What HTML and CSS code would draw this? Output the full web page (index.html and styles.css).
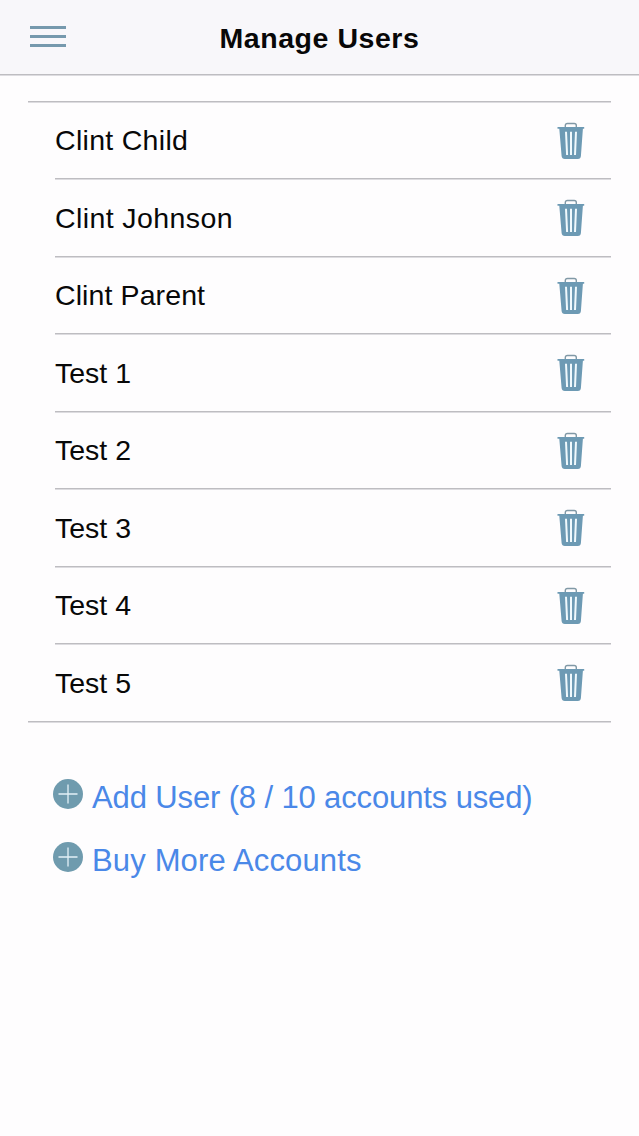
FILE: index.html
```html
<!DOCTYPE html>
<html lang="en">
<head>
<meta charset="utf-8">
<title>Manage Users</title>
<link rel="stylesheet" href="styles.css">
</head>
<body>
<svg class="defs" aria-hidden="true">
  <symbol id="trash" viewBox="0 0 28 38">
    <path d="M8.3 5.4V3.6Q8.3 1.5 10.4 1.5H17.2Q19.3 1.5 19.3 3.6V5.4" fill="none" stroke="#8199a6" stroke-width="1.4"/>
    <path d="M.5 5H27.2V6.8H25.9L23.9 34Q23.7 37 20.8 37H7.8Q4.9 37 4.6 34L2.3 6.8H.5Z" fill="#6d9ab4"/>
    <path d="M9 9.8 10.1 33M14 9.8V33M19 9.8 18 33" fill="none" stroke="#f0f9fd" stroke-width="2"/>
  </symbol>
  <symbol id="plus" viewBox="0 0 30 30">
    <circle cx="15" cy="15" r="15" fill="#6f9bae"/>
    <path d="M5.5 15H24.5M15 5.5V24.5" stroke="#e3f1f7" stroke-width="1.3"/>
  </symbol>
</svg>
<header class="header">
  <button class="menu" aria-label="Menu"><span></span><span></span><span></span></button>
  <h1 class="title">Manage Users</h1>
</header>
<main>
  <ul class="users">
    <li class="user"><span class="name child">Clint Child</span><svg class="trash"><use href="#trash"/></svg></li>
    <li class="user"><span class="name johnson">Clint Johnson</span><svg class="trash"><use href="#trash"/></svg></li>
    <li class="user"><span class="name parent">Clint Parent</span><svg class="trash"><use href="#trash"/></svg></li>
    <li class="user"><span class="name">Test 1</span><svg class="trash"><use href="#trash"/></svg></li>
    <li class="user"><span class="name">Test 2</span><svg class="trash"><use href="#trash"/></svg></li>
    <li class="user"><span class="name">Test 3</span><svg class="trash"><use href="#trash"/></svg></li>
    <li class="user"><span class="name">Test 4</span><svg class="trash"><use href="#trash"/></svg></li>
    <li class="user"><span class="name">Test 5</span><svg class="trash"><use href="#trash"/></svg></li>
  </ul>
  <nav class="actions">
    <a class="action"><svg class="plus"><use href="#plus"/></svg><span class="label add">Add User (8 / 10 accounts used)</span></a>
    <a class="action"><svg class="plus"><use href="#plus"/></svg><span class="label buy">Buy More Accounts</span></a>
  </nav>
</main>
</body>
</html>
```
FILE: styles.css
```css
* { box-sizing: border-box; }
body {
  margin: 0;
  min-height: 1136px;
  background: #fefdfe;
  color: #080808;
  font-family: "Liberation Sans", Arial, sans-serif;
}
.defs { display: none; }
.header {
  display: grid;
  grid-template-columns: 96px 1fr 96px;
  height: 75px;
  background: #f8f7fa;
  border-bottom: 1px solid #bebdc1;
  box-shadow: 0 1px #dddce0;
}
.menu {
  display: flex;
  flex-direction: column;
  gap: 6px;
  width: 36px;
  margin: 26px 0 0 30px;
  padding: 0;
  border: 0;
  background: none;
}
.menu span { width: 36px; height: 3px; background: #7699ad; }
.title {
  margin: 0;
  padding-top: 22px;
  font-size: 28.5px;
  line-height: 32px;
  font-weight: 700;
  letter-spacing: 0.55px;
  text-align: center;
  white-space: nowrap;
}
.users {
  list-style: none;
  margin: 26px 28px 0;
  padding: 0;
  border-top: 1px solid #bebdc1;
  border-bottom: 1px solid #bebdc1;
  box-shadow: 0 1px #dddce0, inset 0 1px #dddce0;
}
.user {
  display: flex;
  justify-content: space-between;
  align-items: flex-start;
  height: 77px;
  margin-left: 27px;
  padding: 20px 26px 0 0;
  border-bottom: 1px solid #bebdc1;
  box-shadow: 0 1px #dddce0;
}
.user:nth-child(even) { height: 78px; }
.user:last-child { height: 77px; border-bottom: 0; box-shadow: none; }
.name { margin-top: 2px; font-size: 28.5px; line-height: 32px; white-space: nowrap; }
.user:nth-child(even) .name { margin-top: 3px; }
.child { letter-spacing: 0.3px; }
.johnson { letter-spacing: 0.4px; }
.parent { letter-spacing: 0.1px; }
.trash { width: 28px; height: 38px; }
.actions {
  display: flex;
  flex-direction: column;
  gap: 27px;
  margin: 57px 0 0 53px;
}
.action { display: flex; align-items: flex-start; gap: 9px; height: 36px; color: #4a88e8; }
.plus { width: 30px; height: 30px; }
.label { margin-top: 1px; font-size: 31px; line-height: 36px; white-space: nowrap; }
.add { letter-spacing: -0.13px; }
.buy { letter-spacing: 0.15px; }
```
